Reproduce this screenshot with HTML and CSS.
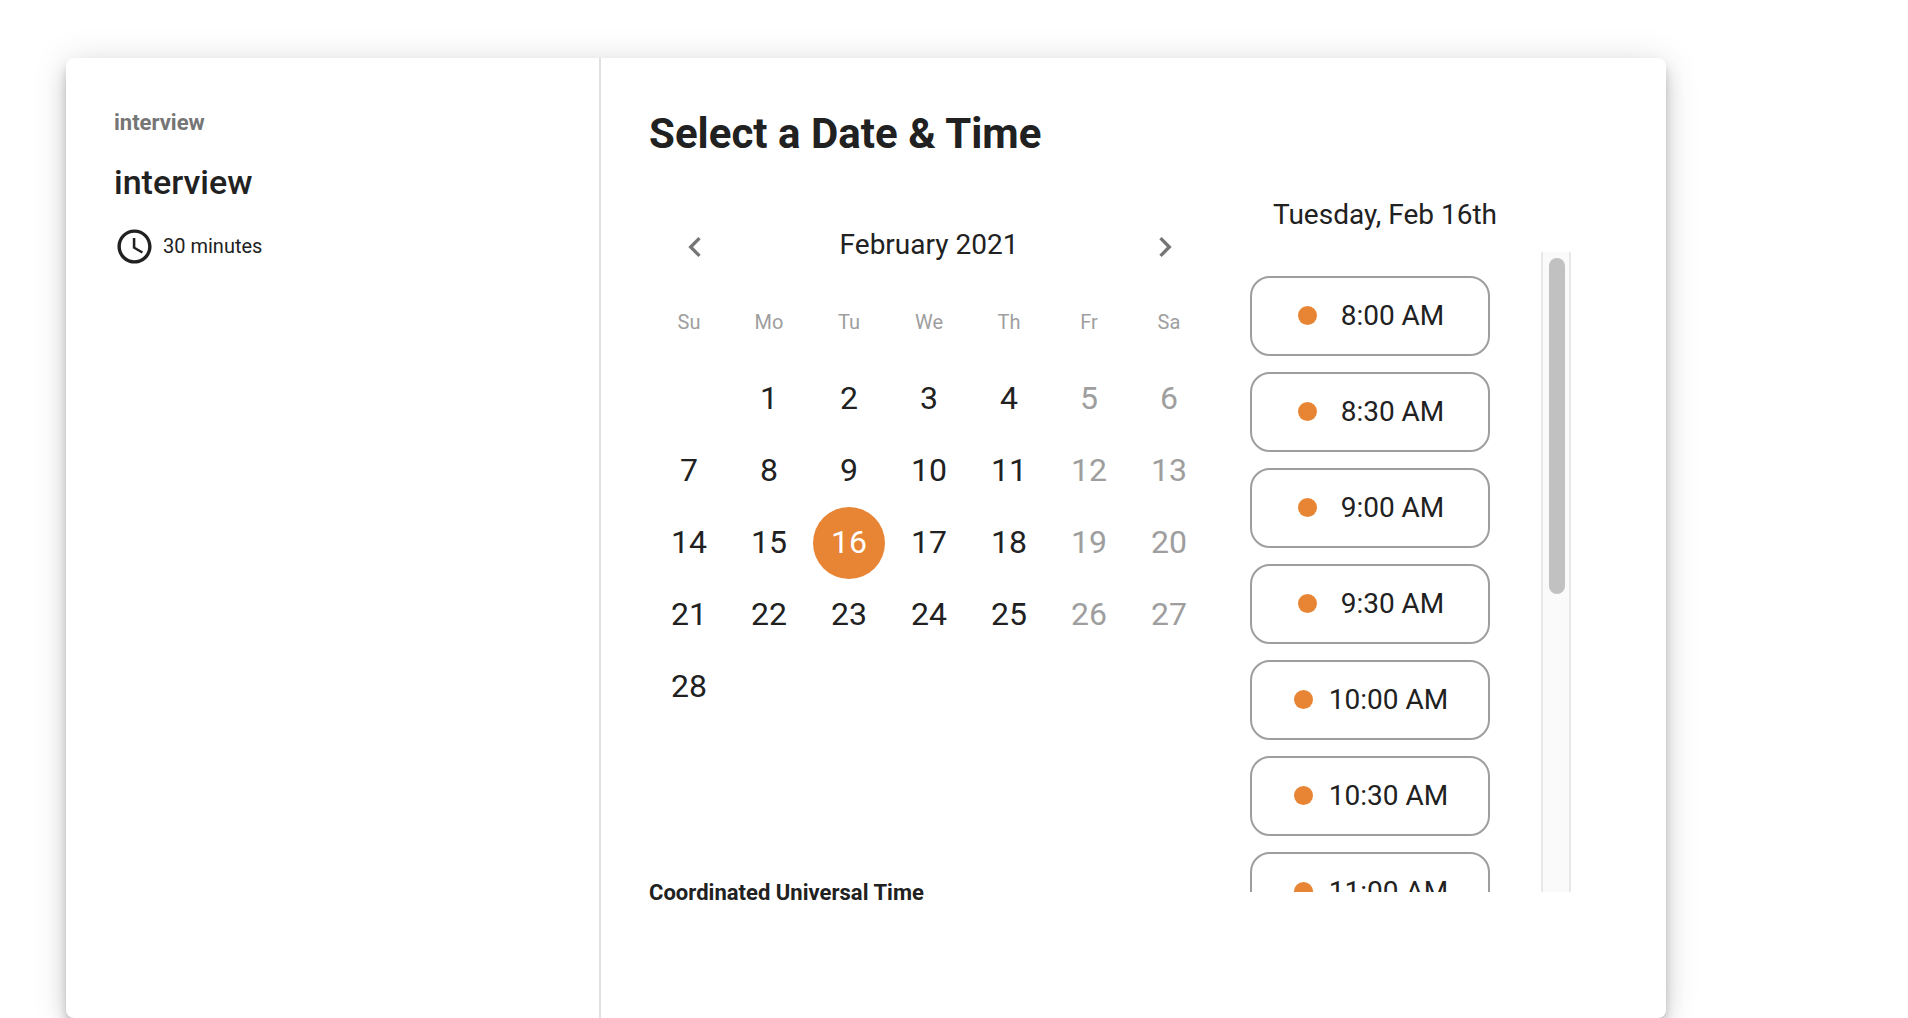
FILE: index.html
```html
<!DOCTYPE html>
<html lang="en">
<head>
<meta charset="utf-8">
<title>Select a Date &amp; Time</title>
<link rel="stylesheet" href="styles.css">
</head>
<body>
<main class="card">
  <section class="summary">
    <p class="owner">interview</p>
    <h2 class="event-name">interview</h2>
    <div class="duration">
      <svg class="clock" viewBox="0 0 24 24" fill="currentColor"><path d="M11.99 2C6.47 2 2 6.48 2 12s4.47 10 9.99 10C17.52 22 22 17.52 22 12S17.52 2 11.99 2zM12 20c-4.42 0-8-3.58-8-8s3.58-8 8-8 8 3.58 8 8-3.58 8-8 8z"/><path d="M12.5 7H11v6l5.25 3.15.75-1.23-4.5-2.67z"/></svg>
      <span>30 minutes</span>
    </div>
  </section>
  <section class="picker">
    <h1 class="title">Select a Date &amp; Time</h1>
    <div class="columns">
      <div class="calendar">
        <div class="month-bar">
          <svg class="arrow" viewBox="0 0 24 24" fill="currentColor"><path d="M15.41 7.41L14 6l-6 6 6 6 1.41-1.41L10.83 12z"/></svg>
          <span class="month">February 2021</span>
          <svg class="arrow" viewBox="0 0 24 24" fill="currentColor"><path d="M10 6L8.59 7.41 13.17 12l-4.58 4.59L10 18l6-6z"/></svg>
        </div>
        <div class="grid weekdays"><span>Su</span><span>Mo</span><span>Tu</span><span>We</span><span>Th</span><span>Fr</span><span>Sa</span></div>
        <div class="grid days">
          <span></span><span>1</span><span>2</span><span>3</span><span>4</span><span class="off">5</span><span class="off">6</span>
          <span>7</span><span>8</span><span>9</span><span>10</span><span>11</span><span class="off">12</span><span class="off">13</span>
          <span>14</span><span>15</span><span class="selected">16</span><span>17</span><span>18</span><span class="off">19</span><span class="off">20</span>
          <span>21</span><span>22</span><span>23</span><span>24</span><span>25</span><span class="off">26</span><span class="off">27</span>
          <span>28</span>
        </div>
        <p class="timezone">Coordinated Universal Time</p>
      </div>
      <div class="times">
        <p class="date">Tuesday, Feb 16th</p>
        <div class="scroller">
          <div class="slots">
            <button class="slot"><i class="dot"></i>8:00 AM</button>
            <button class="slot"><i class="dot"></i>8:30 AM</button>
            <button class="slot"><i class="dot"></i>9:00 AM</button>
            <button class="slot"><i class="dot"></i>9:30 AM</button>
            <button class="slot long"><i class="dot"></i>10:00 AM</button>
            <button class="slot long"><i class="dot"></i>10:30 AM</button>
            <button class="slot long"><i class="dot"></i>11:00 AM</button>
          </div>
          <div class="track"><div class="thumb"></div></div>
        </div>
      </div>
    </div>
  </section>
</main>
</body>
</html>
```
FILE: styles.css
```css
* { box-sizing: border-box; }
html { height: 100%; overflow: hidden; }
body {
  margin: 0;
  height: 100%;
  overflow: hidden;
  padding: 58px 0 0 66px;
  background: #fff;
  color: #212121;
  font-family: Roboto, "Liberation Sans", sans-serif;
}
h1, h2, p { margin: 0; }

.card {
  display: flex;
  width: 1600px;
  height: 960px;
  border-radius: 8px;
  background: #fff;
  box-shadow: 0 6px 10px -2px rgba(0,0,0,.2), 0 12px 20px 0 rgba(0,0,0,.14), 0 2px 36px 0 rgba(0,0,0,.12);
}

.summary {
  width: 535px;
  padding: 49px 48px 48px;
  border-right: 2px solid #e0e0e0;
}
.owner { font-size: 22px; line-height: 32px; font-weight: 700; color: #757575; }
.event-name { margin-top: 23px; font-size: 34px; line-height: 40px; font-weight: 500; }
.duration { display: flex; align-items: center; gap: 8px; margin-top: 23px; font-size: 20px; line-height: 42px; }
.clock { width: 41px; height: 41px; }

.picker { flex: 1; padding: 48px 0 0 48px; }
.title { font-size: 42px; line-height: 56px; font-weight: 700; letter-spacing: .02px; }
.columns { display: flex; gap: 41px; margin-top: 32px; }

.calendar { width: 560px; }
.month-bar { display: flex; align-items: center; justify-content: space-between; height: 49px; margin-top: 28px; padding: 0 24px 0 26px; }
.month { margin-right: 2px; font-size: 28px; line-height: 47px; padding-bottom: 4px; }
.arrow { width: 40px; height: 40px; color: #757575; }
.grid { display: grid; grid-template-columns: repeat(7, 80px); justify-items: center; text-align: center; }
.weekdays { margin-top: 33px; font-size: 20px; line-height: 36px; color: #9e9e9e; }
.days { grid-auto-rows: 72px; margin-top: 23px; font-size: 32px; line-height: 70px; }
.days span { width: 72px; }
.off { color: #9e9e9e; }
.selected { border-radius: 50%; background: #e78534; color: #fff; }
.timezone { margin-top: 154px; font-size: 22px; line-height: 32px; font-weight: 700; letter-spacing: .02px; }

.times { width: 321px; }
.date { width: 270px; padding-top: 1px; font-size: 28px; line-height: 40px; text-align: center; }
.scroller { display: flex; justify-content: space-between; height: 640px; margin-top: 17px; overflow: hidden; }
.slots { display: flex; flex-direction: column; gap: 16px; padding-top: 24px; }
.slot {
  display: flex;
  flex: none;
  align-items: center;
  justify-content: center;
  gap: 24px;
  width: 240px;
  height: 80px;
  padding: 0 0 2px 2px;
  border: 2px solid #9e9e9e;
  border-radius: 20px;
  background: #fff;
  color: #212121;
  font: 400 28px Roboto, "Liberation Sans", sans-serif;
}
.slot.long { gap: 16px; }
.dot { width: 19px; height: 19px; border-radius: 50%; background: #e78534; }
.track { width: 30px; padding: 6px; border: solid #e8e8e8; border-width: 0 2px; background: #fafafa; }
.thumb { width: 16px; height: 336px; border-radius: 8px; background: #c1c1c1; }
```
